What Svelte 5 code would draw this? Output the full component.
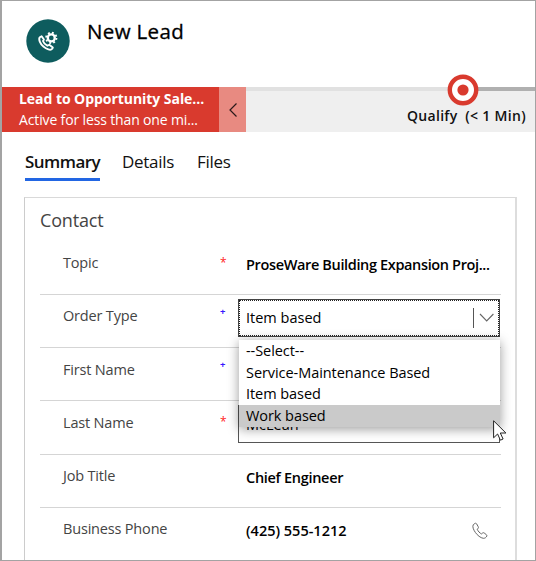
<script>
  const fields = [
    { label: 'Topic', mark: '*', tone: 'required', value: 'ProseWare Building Expansion Proj...', kind: 'topic' },
    { label: 'Order Type', mark: '+', tone: 'recommended', value: 'Item based', kind: 'select' },
    { label: 'First Name', mark: '+', tone: 'recommended', value: '', kind: 'empty' },
    { label: 'Last Name', mark: '*', tone: 'required', value: 'McLean', kind: 'input' },
    { label: 'Job Title', mark: '', tone: '', value: 'Chief Engineer', kind: 'job' },
    { label: 'Business Phone', mark: '', tone: '', value: '(425) 555-1212', kind: 'phone' }
  ];
  const options = ['--Select--', 'Service-Maintenance Based', 'Item based', 'Work based'];
</script>

<div class="window">
  <header>
    <div class="avatar">
      <svg width="44" height="44" viewBox="0 0 44 44">
        <circle cx="22" cy="22" r="21.7" fill="#0e5c5e" />
        <path d="M15.600 17.200l-1.700 1c-1.800 2 .3 6.700 3.500 9.400 3 2.600 7.300 4.200 8.800 2.200l.6-1.300-3.500-2.700-2 .9c-1.800-.8-3.600-2.600-4.300-4.700l.9-1.500z" fill="none" stroke="#fff" stroke-width="1.9" stroke-linejoin="round" />
        <circle cx="25.300" cy="18.900" r="3.500" fill="none" stroke="#fff" stroke-width="2.300" />
        <circle cx="25.300" cy="18.900" r="5.200" fill="none" stroke="#fff" stroke-width="1.800" stroke-dasharray="1.900 2.184" />
      </svg>
    </div>
    <h1>New Lead</h1>
  </header>

  <div class="process">
    <div class="flow">
      <strong>Lead to Opportunity Sale...</strong>
      <span>Active for less than one mi...</span>
    </div>
    <div class="collapse">
      <svg width="10" height="16" viewBox="0 0 10 16"><path d="M8.500 1.500L2 8l6.500 6.500" fill="none" stroke="#2b1a1a" stroke-width="1.200" /></svg>
    </div>
    <div class="track">
      <div class="done"></div>
      <svg class="target" width="32" height="32" viewBox="0 0 32 32">
        <circle cx="16" cy="16" r="13.200" fill="#fff" stroke="#d93a2e" stroke-width="4.400" />
        <circle cx="16" cy="16" r="5.600" fill="#d93a2e" />
      </svg>
      <div class="stage">Qualify&nbsp; (&lt; 1 Min)</div>
    </div>
  </div>

  <nav>
    <span class="tab active">Summary</span>
    <span class="tab details">Details</span>
    <span class="tab files">Files</span>
  </nav>

  <section>
    <h2>Contact</h2>
    {#each fields as f}
      <div class="row">
        <label>{f.label}</label>
        <i class={f.tone}>{f.mark}</i>
        <div class="value {f.kind}">
          <span>{f.value}</span>
          {#if f.kind === 'select'}
            <svg class="chevron" width="26" height="22" viewBox="0 0 26 22">
              <path d="M1.500 1v20" stroke="#555" stroke-width="1" />
              <path d="M8 7l6.700 7 6.700-7" fill="none" stroke="#666" stroke-width="1.100" />
            </svg>
            <div class="menu">
              {#each options as o, n}
                <div class="option" class:hover={n === 3}>{o}</div>
              {/each}
            </div>
          {:else if f.kind === 'phone'}
            <svg class="handset" width="18" height="18" viewBox="0 0 18 18">
              <path d="M3.800 1.500l-1.500 1.200c-2.200 3.500 4.500 12.800 10 13.600 1.700.1 2.900-.9 3.500-2.200.2-.6 0-1-.4-1.400l-2.200-1.700c-.6-.4-1.100-.4-1.600 0l-1 .9c-1.800-.6-3.700-2.900-4.400-4.700l1-1c.4-.5.3-1 0-1.500L5.600 1.800c-.5-.6-1.200-.7-1.800-.3z" fill="none" stroke="#666" stroke-width="1" stroke-linejoin="round" />
            </svg>
          {/if}
        </div>
      </div>
    {/each}
  </section>

  <svg class="cursor" width="16" height="22" viewBox="0 0 16 22">
    <path d="M.6.8v17l4-3.800 2.800 6.200 2.700-1.200-2.800-6h5.600z" fill="#fff" stroke="#222" stroke-width="1" />
  </svg>
</div>

<style>
  :global(body) { background: #fff; overflow: hidden; }
  .window {
    position: relative;
    box-sizing: border-box;
    width: 536px;
    height: 561px;
    overflow: hidden;
    border: 1px solid #a3a3a3;
    border-left-width: 2px;
    font-family: 'Open Sans', 'Noto Sans', sans-serif;
    color: #111;
    background: #fff;
    white-space: nowrap;
  }
  header { display: flex; height: 86px; }
  .avatar { margin: 18px 0 0 24px; width: 44px; height: 44px; }
  svg { display: block; }
  h1 {
    margin: 15px 0 0 17px;
    font-size: 20.500px;
    line-height: 30px;
    font-weight: 500;
    letter-spacing: .35px;
    color: #000;
    -webkit-text-stroke: .3px #000;
  }
  .process { display: flex; height: 45px; }
  .flow {
    box-sizing: border-box;
    width: 217px;
    padding: 1px 0 0 17px;
    background: #d93a2e;
    color: #fff;
    font-size: 14px;
    line-height: 21px;
  }
  .flow strong, .flow span { display: block; }
  .flow strong { font-weight: 700; letter-spacing: -.05px; }
  .flow span { letter-spacing: -.14px; }
  .collapse {
    display: flex;
    width: 27px;
    align-items: center;
    justify-content: center;
    background: #e88a81;
  }
  .track {
    position: relative;
    box-sizing: border-box;
    flex: 1;
    border-top: 4px solid #e1e1e1;
    background: #efefef;
  }
  .done { position: absolute; top: -4px; right: 0; width: 72px; height: 4px; background: #b0b0b0; }
  .target { position: absolute; left: 201px; top: -17px; }
  .stage {
    margin: 15px 0 0 161px;
    font-size: 14px;
    line-height: 20px;
    font-weight: 600;
    letter-spacing: .3px;
  }
  nav { display: flex; height: 49px; margin-left: 23px; padding-top: 16px; }
  .tab { font-size: 17px; line-height: 28px; height: 30px; letter-spacing: -.3px; }
  .active { width: 75px; border-bottom: 3px solid #2266e3; font-weight: 600; letter-spacing: -.55px; }
  .details { margin-left: 22px; width: 53px; }
  .files { margin-left: 22px; }
  section {
    box-sizing: border-box;
    width: 493px;
    height: 400px;
    margin-left: 22px;
    padding: 0 14px 0 15px;
    border: 1px solid #ccc;
    border-top-color: #d9d9d9;
    border-right: 2px solid #ddd;
  }
  h2 { margin: 0; padding: 8px 0 11.500px; height: 24px; font-size: 18px; line-height: 28px; font-weight: 400; letter-spacing: -.15px; color: #444; }
  .row { display: flex; box-sizing: border-box; height: 53.300px; border-bottom: 1px solid #d5d5d5; }
  .row:last-child { border: 0; }
  label { box-sizing: border-box; width: 181px; padding: 10.500px 0 0 23px; font-size: 14.500px; line-height: 22px; letter-spacing: -.18px; color: #444; }
  i { width: 17px; margin: 0 1px 0 -1px; font-style: normal; }
  .required { color: #f22; padding-top: 11px; font-size: 12px; line-height: 20px; }
  .recommended { color: #3818ff; padding-top: 8px; font-size: 9.500px; line-height: 18px; font-weight: 700; }
  .value {
    position: relative;
    box-sizing: border-box;
    width: 262px;
    height: 38px;
    margin-top: 4px;
    padding-left: 8px;
    font-size: 14.500px;
    line-height: 38px;
    font-weight: 600;
    color: #000;
  }
  .topic { letter-spacing: -.36px; }
  .job { letter-spacing: -.3px; }
  .select { border: 1px solid #444; padding-left: 7px; line-height: 36px; font-weight: 400; }
  .select::before { content: ''; position: absolute; inset: 0; border: 1px dotted #222; }
  .input { border: 1px solid #555; padding-left: 7px; line-height: 37px; font-weight: 400; }
  .chevron { position: absolute; right: 1px; top: 7px; }
  .handset { position: absolute; right: 11px; top: 10px; }
  .menu {
    position: absolute;
    z-index: 2;
    left: 0;
    top: 40px;
    width: 261px;
    background: #fff;
    box-shadow: 0 2px 11px #0006;
    line-height: 22px;
    letter-spacing: -.06px;
  }
  .option { height: 21.750px; padding-left: 7px; }
  .hover { background: #cacaca; }
  .cursor { position: absolute; z-index: 3; left: 491px; top: 419px; }
</style>
